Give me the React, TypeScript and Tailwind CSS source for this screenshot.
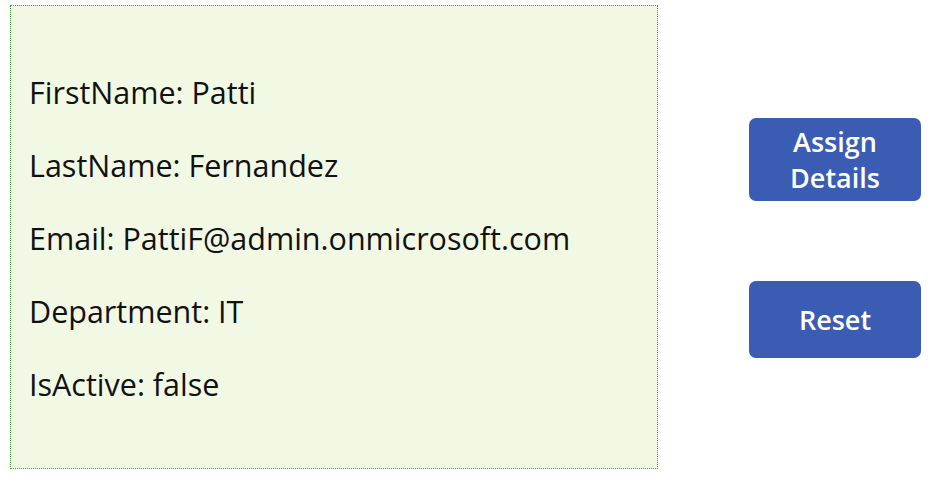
export default function App() {
  const fields = [
    "FirstName: Patti",
    "LastName: Fernandez",
    "Email: PattiF@admin.onmicrosoft.com",
    "Department: IT",
    "IsActive: false",
  ];

  return (
    <div
      className="flex h-[482px] w-[940px] items-start bg-white pl-[10px] pt-[5px]"
      style={{ fontFamily: '"Open Sans", "Noto Sans", sans-serif' }}
    >
      {/* record panel */}
      <div className="flex h-[464px] w-[648px] flex-col border border-dotted border-[#3f9a35] bg-[#f1f9e5] pl-[18px] pt-[50px]">
        {fields.map((f) => (
          <div key={f} className="h-[73px] text-[30.5px] leading-[73px] text-[#111]">
            {f}
          </div>
        ))}
      </div>

      {/* actions */}
      <div className="ml-[91px] flex flex-col pt-[113px]">
        <button className="flex h-[83px] w-[172px] flex-col items-center justify-center rounded-[7px] bg-[#3a5cb2] text-[27px] font-semibold leading-[36px] text-white">
          <span>Assign</span>
          <span>Details</span>
        </button>
        <button className="mt-[80px] h-[77px] w-[172px] rounded-[7px] bg-[#3a5cb2] pt-[2px] text-[27px] font-semibold text-white">
          Reset
        </button>
      </div>
    </div>
  );
}
